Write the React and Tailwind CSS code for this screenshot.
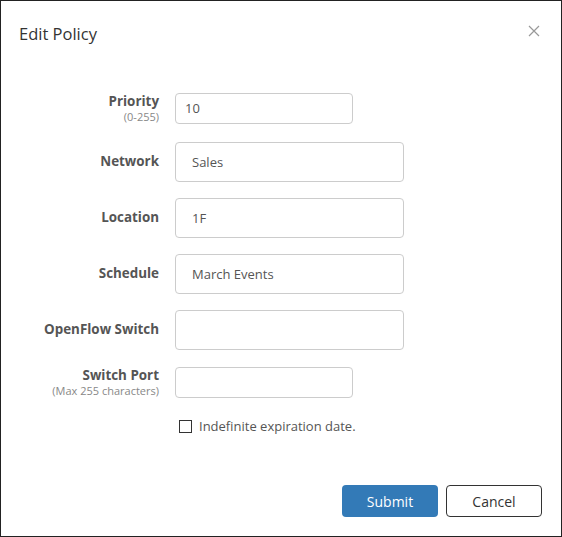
import React, { useState } from 'react';

const font = { fontFamily: '"Open Sans", "Noto Sans", sans-serif' };

function Field({ label, hint, value, short }) {
  return (
    <div className="flex items-center">
      <div className="w-[160px] pr-[2px] text-right leading-none">
        <div className="text-[13.4px] font-bold text-[#555]">{label}</div>
        {hint && <div className="mt-[3px] text-[11px] text-[#888]">{hint}</div>}
      </div>
      <input
        type="text"
        defaultValue={value}
        className={
          'ml-[14px] rounded-[4px] border border-[#ccc] text-[13px] text-[#555] outline-none ' +
          (short ? 'h-[31px] w-[178px] px-[9px]' : 'h-[40px] w-[229px] px-[16px]')
        }
      />
    </div>
  );
}

export default function App() {
  const [forever, setForever] = useState(false);

  return (
    <div style={font} className="flex h-[537px] w-[562px] flex-col border border-[#222] bg-white">
      <div className="flex items-start justify-between pl-[18px] pr-[21px] pt-[21px]">
        <h1 className="text-[16.5px] text-[#333]">Edit Policy</h1>
        <button className="mt-[3px] text-[#999]">
          <svg width="12" height="12" viewBox="0 0 12 12" stroke="currentColor" strokeWidth="1.2">
            <path d="M1 1L11 11M11 1L1 11" />
          </svg>
        </button>
      </div>

      <div className="mt-[46px] flex flex-col">
        <Field label="Priority" hint="(0-255)" value="10" short />
        <div className="mt-[18px] flex flex-col gap-[16px]">
          <Field label="Network" value="Sales" />
          <Field label="Location" value="1F" />
          <Field label="Schedule" value="March Events" />
          <Field label="OpenFlow Switch" value="" />
        </div>
        <div className="mt-[17px]">
          <Field label="Switch Port" hint="(Max 255 characters)" value="" short />
        </div>
        <label className="ml-[178px] mt-[19px] flex items-center gap-[7px] text-[13px] text-[#555]">
          <input
            type="checkbox"
            checked={forever}
            onChange={ev => setForever(ev.target.checked)}
            className="h-[13px] w-[13px] appearance-none border border-[#333] bg-white"
          />
          Indefinite expiration date.
        </label>
      </div>

      <div className="mt-auto flex justify-end gap-[8px] pb-[19px] pr-[19px]">
        <button className="h-[32px] w-[96px] rounded-[4px] bg-[#337ab7] text-[14px] text-white">Submit</button>
        <button className="h-[32px] w-[96px] rounded-[4px] border border-[#333] bg-white text-[14px] text-[#333]">Cancel</button>
      </div>
    </div>
  );
}
